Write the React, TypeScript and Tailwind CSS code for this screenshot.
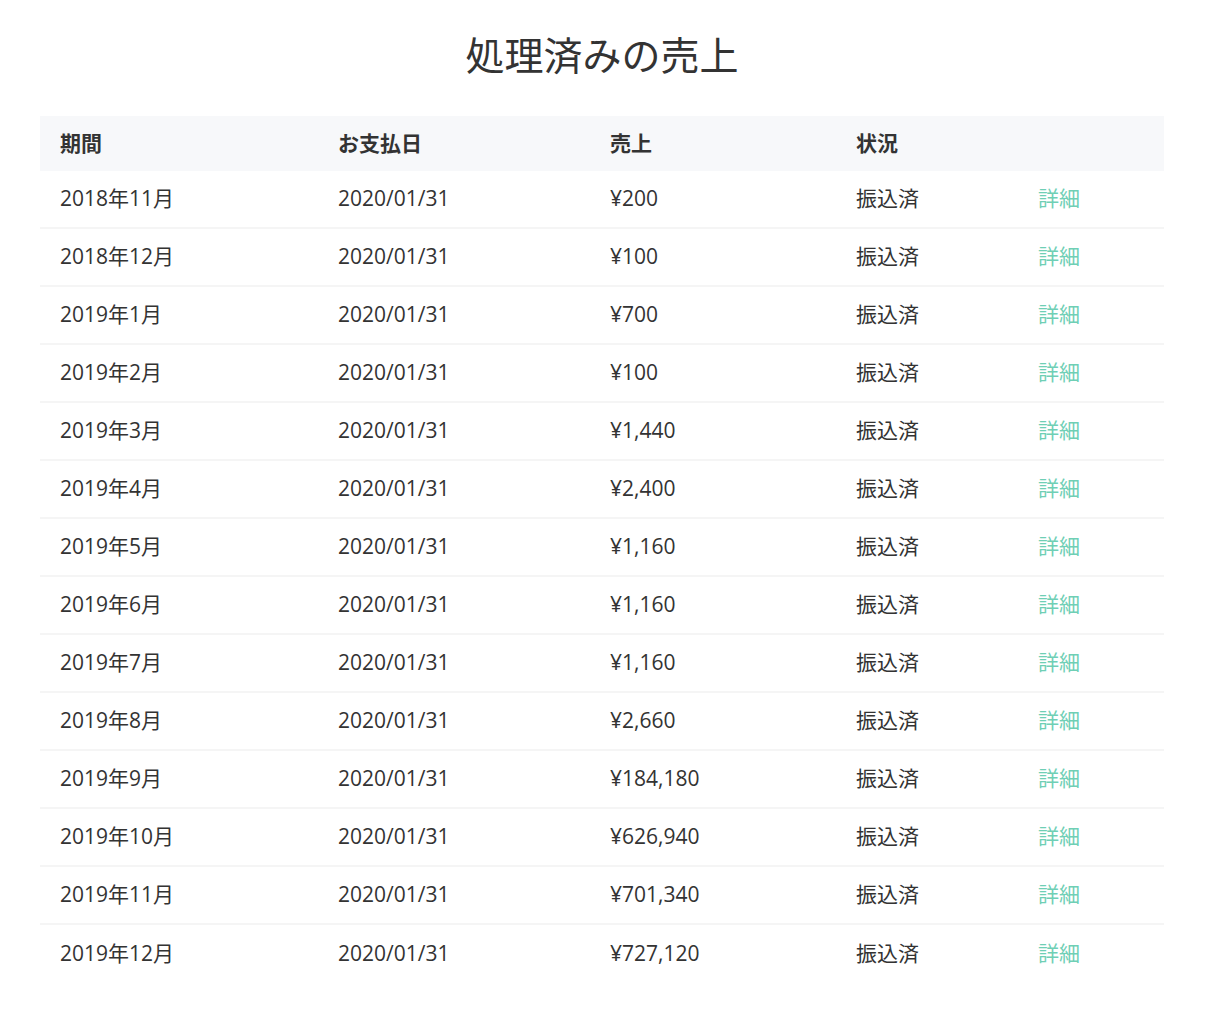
const rows: [string, string][] = [
  ["2018年11月", "¥200"], ["2018年12月", "¥100"], ["2019年1月", "¥700"], ["2019年2月", "¥100"],
  ["2019年3月", "¥1,440"], ["2019年4月", "¥2,400"], ["2019年5月", "¥1,160"], ["2019年6月", "¥1,160"],
  ["2019年7月", "¥1,160"], ["2019年8月", "¥2,660"], ["2019年9月", "¥184,180"], ["2019年10月", "¥626,940"],
  ["2019年11月", "¥701,340"], ["2019年12月", "¥727,120"],
];
const cols = "grid grid-cols-[278px_272px_246px_182px_1fr] items-center pl-5";
export default function App() {
  return (
    <div className="w-[1212px] h-[1018px] bg-white text-[#333] pl-10 pr-12" style={{ fontFamily: '"Open Sans", "Noto Sans CJK JP", sans-serif' }}>
      <h1 className="text-[39px] text-center pt-[26px] h-[116px] leading-[58px] text-[#333]">処理済みの売上</h1>
      <div className={`${cols} h-[55px] bg-[#f7f8fa] text-[21px] font-bold`}>
        <div>期間</div><div>お支払日</div><div>売上</div><div>状況</div><div></div>
      </div>
      {rows.map(([p, s], i) => (
        <div key={i} className={`${cols} h-[58px] text-[21px] ${i < rows.length - 1 ? "border-b-2 border-[#f5f5f5]" : ""}`}>
          <div>{p}</div><div>2020/01/31</div><div>{s}</div><div>振込済</div>
          <div className="text-[#6fcfb5]">詳細</div>
        </div>
      ))}
    </div>
  );
}
